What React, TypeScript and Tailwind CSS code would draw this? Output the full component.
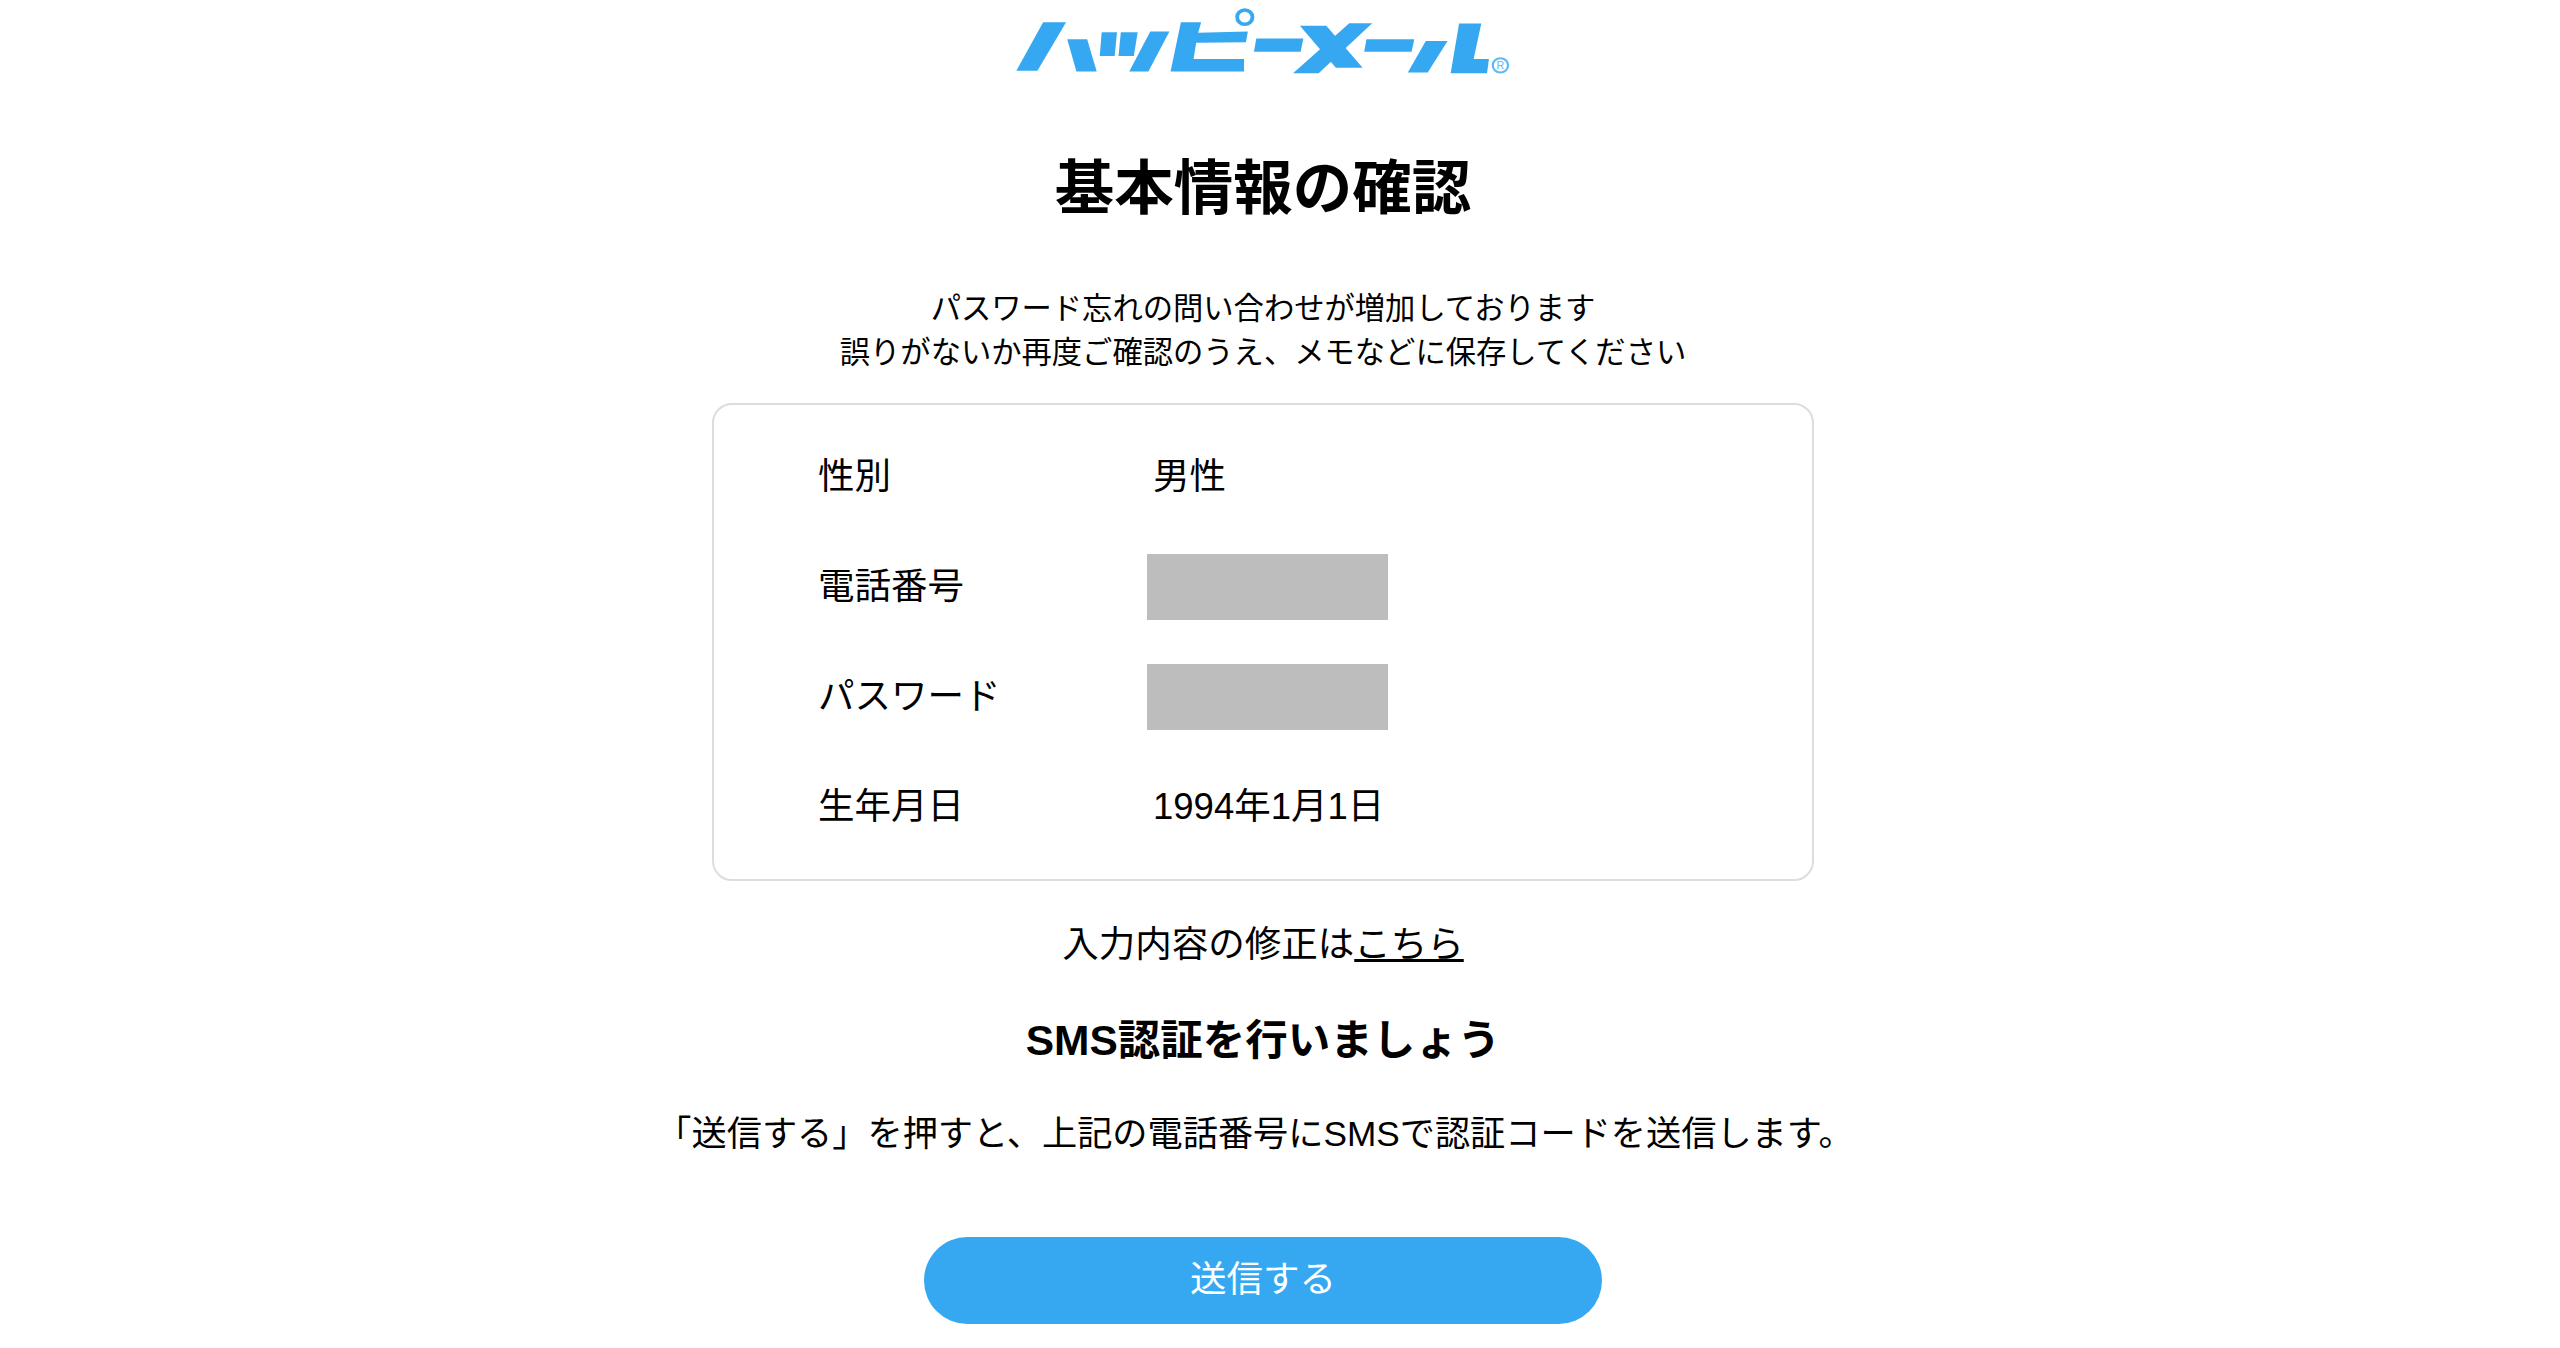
const rows = [
  { label: '性別', value: '男性' },
  { label: '電話番号', value: null },
  { label: 'パスワード', value: null },
  { label: '生年月日', value: '1994年1月1日' },
];

const Logo = () => (
  <svg viewBox="0 0 1568 280" preserveAspectRatio="none" className="ml-[34px] w-[600px] h-[100px] shrink-0" fill="#36a8f2">
    <polygon points="165,62 225,62 150,198 95,198" />
    <polygon points="228,110 280,110 305,200 252,200" />
    <polygon points="318,90 358,90 352,157 313,157" />
    <polygon points="368,90 412,90 402,157 362,157" />
    <polygon points="445,88 495,88 440,200 390,200" />
    <polygon points="525,62 578,62 570,92 700,88 695,118 565,120 558,165 690,165 690,200 498,200" />
    <circle cx="692" cy="48" r="20" fill="none" stroke="#36a8f2" strokeWidth="10" />
    <polygon points="722,108 845,108 838,145 716,145" />
    <polygon points="965,65 1025,65 885,205 818,205" />
    <polygon points="836,72 905,72 1000,190 930,190" />
    <polygon points="1010,110 1135,110 1128,145 1004,145" />
    <polygon points="1165,115 1222,115 1170,203 1118,203" />
    <polygon points="1252,66 1310,66 1290,165 1330,165 1325,205 1230,205" />
    <circle cx="1360" cy="183" r="20" fill="none" stroke="#36a8f2" strokeWidth="6" opacity="0.8" />
    <text x="1360" y="193" textAnchor="middle" fontSize="28" fontFamily="Liberation Sans" opacity="0.8">R</text>
  </svg>
);

export default function App() {
  return (
    <div className="w-[2526px] min-h-[1348px] bg-white text-black flex flex-col items-center font-['Liberation_Sans','Noto_Sans_CJK_JP',sans-serif]">
      <Logo />
      <h1 className="mt-[49px] text-[59.5px] leading-[80px] font-bold">基本情報の確認</h1>
      <p className="mt-[58px] text-[30.3px] leading-[44px] text-center">
        パスワード忘れの問い合わせが増加しております
        <br />
        誤りがないか再度ご確認のうえ、メモなどに保存してください
      </p>
      <div className="mt-[28px] w-[1102px] h-[478px] border-2 border-[#dddddd] rounded-[20px] pl-[104px] pt-[39px] flex flex-col gap-[44px]">
        {rows.map((row) => (
          <div key={row.label} className="flex items-center h-[66px] text-[36.5px]">
            <div className="w-[329px]">{row.label}</div>
            {row.value ? (
              <div className="pl-[6px]">{row.value}</div>
            ) : (
              <div className="w-[241px] h-[66px] bg-[#bdbdbd]" />
            )}
          </div>
        ))}
      </div>
      <p className="mt-[38px] text-[36.5px] leading-[52px]">
        入力内容の修正は<span className="underline">こちら</span>
      </p>
      <h2 className="mt-[42px] text-[42.5px] leading-[56px] font-bold">SMS認証を行いましょう</h2>
      <p className="mt-[40px] pr-[16px] text-[35.2px] leading-[50px]">「送信する」を押すと、上記の電話番号にSMSで認証コードを送信します。</p>
      <button className="mt-[78px] w-[678px] h-[87px] rounded-full bg-[#36a8f2] text-white text-[36.5px]">送信する</button>
    </div>
  );
}
